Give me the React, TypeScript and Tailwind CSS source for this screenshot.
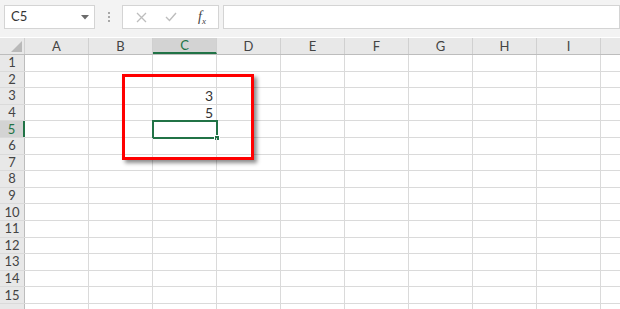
import React from 'react';

const cols = ['A', 'B', 'C', 'D', 'E', 'F', 'G', 'H', 'I', ''];
const rows = Array.from({ length: 16 }, (_, i) => i + 1);

const values: Record<string, string> = { C3: '3', C4: '5' };

function Toolbar() {
  return (
    <div className="flex h-[37px] items-start gap-0 bg-[#f3f3f3] pt-[5px]">
      {/* name box */}
      <div className="ml-[4px] flex h-[24px] w-[91px] items-center justify-between border border-[#d4d4d4] bg-white pl-[6px] pr-[5px] text-[13px] text-[#333]">
        <span>C5</span>
        <svg width="8" height="5" viewBox="0 0 8 5">
          <path d="M0 0 L8 0 L4 4.5 Z" fill="#6b6b6b" />
        </svg>
      </div>

      <div className="flex h-[24px] w-[27px] flex-col items-center justify-center gap-[2px]">
        <span className="h-[2px] w-[2px] bg-[#a8a8a8]" />
        <span className="h-[2px] w-[2px] bg-[#a8a8a8]" />
        <span className="h-[2px] w-[2px] bg-[#a8a8a8]" />
      </div>

      {/* cancel / enter / fx */}
      <div className="flex h-[24px] w-[97px] items-center border border-[#d4d4d4] bg-white">
        <div className="flex w-[32px] justify-center pl-[4px]">
          <svg width="11" height="11" viewBox="0 0 11 11">
            <path d="M1 1 L10 10 M10 1 L1 10" stroke="#bdbdbd" strokeWidth="1.3" />
          </svg>
        </div>
        <div className="flex w-[32px] justify-center">
          <svg width="12" height="10" viewBox="0 0 12 10">
            <path d="M1 5 L4.5 8.5 L11 1" stroke="#bdbdbd" strokeWidth="1.4" fill="none" />
          </svg>
        </div>
        <div className="flex w-[30px] items-end justify-center font-['Liberation_Serif',serif] italic text-[#444]">
          <span className="text-[14px] leading-none">f</span>
          <span className="relative top-[2px] text-[9px] leading-none">x</span>
        </div>
      </div>

      <div className="ml-[4px] h-[24px] flex-1 border border-[#d4d4d4] bg-white" />
    </div>
  );
}

function Grid() {
  return (
    <div className="relative mt-[1px] font-['Lato','Liberation_Sans',sans-serif] text-[13px] text-[#444]">
      {/* header row */}
      <div className="flex h-[17px] border-b border-[#bdbdbd] bg-[#e8e8e8]">
        <div className="flex w-[25px] shrink-0 items-end justify-end border-r border-[#d0d0d0] pb-[2px] pr-[2px]">
          <svg width="11" height="11" viewBox="0 0 11 11">
            <path d="M11 0 L11 11 L0 11 Z" fill="#b9b9b9" />
          </svg>
        </div>
        {cols.map((c) => (
          <div
            key={c || 'x'}
            className={`flex w-[64px] shrink-0 items-center justify-center border-r border-[#d0d0d0] leading-none ${
              c === 'C' ? 'border-b-2 border-b-[#217346] bg-[#d3d3d3] text-[#217346]' : ''
            }`}
          >
            {c}
          </div>
        ))}
      </div>

      {rows.map((r) => (
        <div key={r} className="flex h-[16.6px] border-b border-[#dadada]">
          <div
            className={`flex w-[25px] shrink-0 items-center justify-center border-r leading-none ${
              r === 5
                ? 'border-r-2 border-r-[#217346] bg-[#d3d3d3] text-[#217346]'
                : 'border-[#bdbdbd] bg-[#e8e8e8]'
            }`}
          >
            {r < 16 ? r : ''}
          </div>
          {cols.map((c) => {
            const key = `${c}${r}`;
            const selected = key === 'C5';
            return (
              <div
                key={key || `x${r}`}
                className="relative flex w-[64px] shrink-0 items-center justify-end border-r border-[#dadada] pr-[3px] text-[14px] leading-none text-[#333]"
              >
                {values[key]}
                {selected && (
                  <div className="absolute -left-[1px] -top-[1px] h-[18.6px] w-[66px] border-2 border-[#217346]">
                    <div className="absolute -bottom-[4px] -right-[4px] h-[6px] w-[6px] border border-white bg-[#217346]" />
                  </div>
                )}
              </div>
            );
          })}
        </div>
      ))}

      {/* red annotation box */}
      <div className="absolute left-[122px] top-[36px] h-[86px] w-[132px] border-[3px] border-[#ff0000] shadow-[3px_3px_4px_rgba(0,0,0,0.45)]" />
    </div>
  );
}

export default function App() {
  return (
    <div className="h-[309px] w-[620px] overflow-hidden bg-white font-['Lato','Liberation_Sans',sans-serif]">
      <Toolbar />
      <Grid />
    </div>
  );
}
